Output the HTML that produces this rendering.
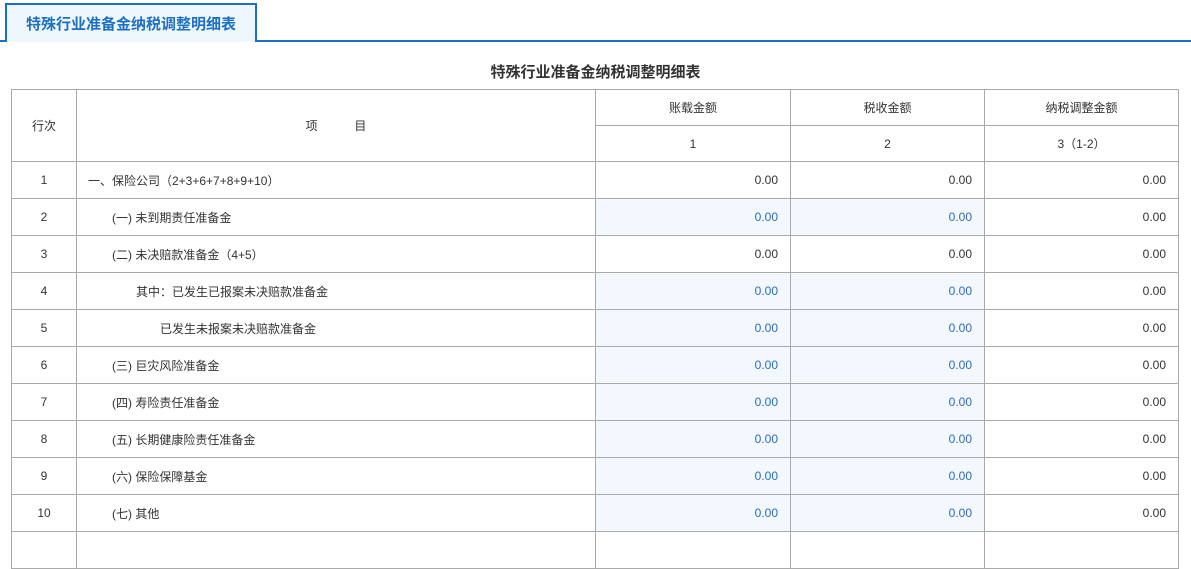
<!DOCTYPE html>
<html><head><meta charset="utf-8"><style>
body{margin:0;width:1191px;height:538px;overflow:hidden;background:#fff;font-family:"Liberation Sans","Noto Sans CJK SC",sans-serif;color:#333;position:relative}
.tabline{position:absolute;left:0;top:40px;width:1191px;height:2px;background:#1e6fc0}
.tab{position:absolute;left:5px;top:3px;height:39px;border:2px solid #1e6fc0;border-bottom:none;background:#eef7fd;color:#1e6fc0;font-weight:bold;font-size:15px;line-height:40px;text-align:center;box-sizing:border-box;width:252px}
h1{position:absolute;left:0;width:1191px;top:61px;margin:0;text-align:center;font-size:15px;font-weight:bold;color:#333;line-height:24px}
table{position:absolute;left:11px;top:89px;border-collapse:collapse;font-size:12px;table-layout:fixed}
td{border:1px solid #aaa;height:36px;padding:0;color:#333}
tr.h td{height:35px}
.c{text-align:center}
.r{text-align:right;padding-right:12px}
.b{background:#f2f8fe;color:#2a6ebb}
.l1{padding-left:11px}.l2{padding-left:35px}.l3{padding-left:59px}.l4{padding-left:83px}
</style></head><body>
<div class="tabline"></div>
<div class="tab">特殊行业准备金纳税调整明细表</div>
<h1>特殊行业准备金纳税调整明细表</h1>
<table>
<colgroup><col style="width:65px"><col style="width:519px"><col style="width:195px"><col style="width:194px"><col style="width:194px"></colgroup>
<tr class="h"><td class="c" rowspan="2">行次</td><td class="c" rowspan="2">项&nbsp;&nbsp;&nbsp;&nbsp;&nbsp;&nbsp;&nbsp;&nbsp;&nbsp;&nbsp;&nbsp;目</td><td class="c">账载金额</td><td class="c">税收金额</td><td class="c">纳税调整金额</td></tr>
<tr class="h"><td class="c">1</td><td class="c">2</td><td class="c">3（1-2）</td></tr>
<tr><td class="c">1</td><td class="l1">一、保险公司（2+3+6+7+8+9+10）</td><td class="r">0.00</td><td class="r">0.00</td><td class="r">0.00</td></tr>
<tr><td class="c">2</td><td class="l2">(一) 未到期责任准备金</td><td class="r b">0.00</td><td class="r b">0.00</td><td class="r">0.00</td></tr>
<tr><td class="c">3</td><td class="l2">(二) 未决赔款准备金（4+5）</td><td class="r">0.00</td><td class="r">0.00</td><td class="r">0.00</td></tr>
<tr><td class="c">4</td><td class="l3">其中：已发生已报案未决赔款准备金</td><td class="r b">0.00</td><td class="r b">0.00</td><td class="r">0.00</td></tr>
<tr><td class="c">5</td><td class="l4">已发生未报案未决赔款准备金</td><td class="r b">0.00</td><td class="r b">0.00</td><td class="r">0.00</td></tr>
<tr><td class="c">6</td><td class="l2">(三) 巨灾风险准备金</td><td class="r b">0.00</td><td class="r b">0.00</td><td class="r">0.00</td></tr>
<tr><td class="c">7</td><td class="l2">(四) 寿险责任准备金</td><td class="r b">0.00</td><td class="r b">0.00</td><td class="r">0.00</td></tr>
<tr><td class="c">8</td><td class="l2">(五) 长期健康险责任准备金</td><td class="r b">0.00</td><td class="r b">0.00</td><td class="r">0.00</td></tr>
<tr><td class="c">9</td><td class="l2">(六) 保险保障基金</td><td class="r b">0.00</td><td class="r b">0.00</td><td class="r">0.00</td></tr>
<tr><td class="c">10</td><td class="l2">(七) 其他</td><td class="r b">0.00</td><td class="r b">0.00</td><td class="r">0.00</td></tr>
<tr><td class="c"></td><td></td><td class="r"></td><td class="r"></td><td class="r"></td></tr>
</table>
</body></html>
